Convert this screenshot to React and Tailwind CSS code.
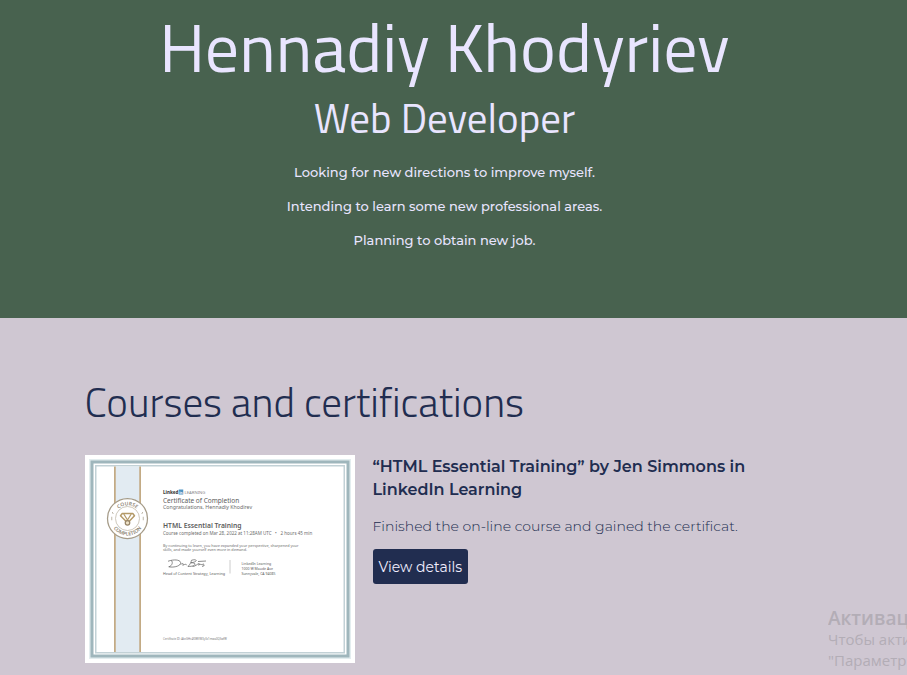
const heading = "font-['Titillium_Web','Roboto',sans-serif]";

const tagline = [
  "Looking for new directions to improve myself.",
  "Intending to learn some new professional areas.",
  "Planning to obtain new job.",
];

function Certificate() {
  return (
    <svg
      viewBox="0 0 1080 832"
      className="block w-full bg-white font-['Noto_Sans',sans-serif]"
      role="img"
      aria-label="Certificate of Completion"
    >
      <defs>
        <path id="seal-top" d="M 117 254 A 53 53 0 0 1 223 254" />
        <path id="seal-bottom" d="M 102 254 A 68 68 0 0 0 238 254" />
      </defs>
      <rect x="20" y="20" width="1040" height="792" fill="none" stroke="#e3edef" strokeWidth="8" />
      <rect x="28" y="28" width="1024" height="776" fill="none" stroke="#9fb6bc" strokeWidth="12" />
      <rect x="43" y="43" width="994" height="748" fill="none" stroke="#c2d1d6" strokeWidth="6" />
      <rect x="116" y="46" width="108" height="742" fill="#e2ebf2" />
      <rect x="116" y="46" width="7" height="742" fill="#c3ab85" />
      <rect x="217" y="46" width="7" height="742" fill="#c3ab85" />

      <circle cx="170" cy="254" r="80" fill="#ffffff" stroke="#a59b88" strokeWidth="5" />
      <circle cx="170" cy="254" r="48" fill="none" stroke="#bdb5a5" strokeWidth="3" />
      <g fill="#8e8676" fontSize="20" fontWeight="600" textAnchor="middle">
        <text><textPath href="#seal-top" startOffset="50%">COURSE</textPath></text>
        <text><textPath href="#seal-bottom" startOffset="50%">COMPLETION</textPath></text>
      </g>
      <g fill="none" stroke="#b49a68" strokeWidth="6" strokeLinejoin="round">
        <path d="M149 234 H191 L198 243 L178 264 H163 L142 243 Z" />
        <path d="M155 236 L170 260 L185 236" strokeWidth="5" />
        <circle cx="170" cy="271" r="9" fill="#efe3c9" stroke="#978568" strokeWidth="5" />
      </g>
      <path d="M109 228 L113 236 M107 247 V261 M231 228 L227 236 M233 247 V261" stroke="#aaa08e" strokeWidth="3" />

      <text x="312" y="156" fontSize="18" fontWeight="800" fill="#3c3c3c">Linked</text>
      <rect x="375" y="138" width="18" height="20" fill="#4f94c3" />
      <text x="377" y="154" fontSize="14" fontWeight="700" fill="#ffffff">in</text>
      <text x="398" y="156" fontSize="17" fill="#888888">LEARNING</text>
      <text x="312" y="192" fontSize="26" fill="#5c5c5c">Certificate of Completion</text>
      <text x="312" y="217" fontSize="21" fill="#6c6c6c">Congratulations, Hennadiy Khodirev</text>
      <text x="312" y="292" fontSize="27" fontWeight="600" fill="#5c5c5c">HTML Essential Training</text>
      <text x="312" y="321" fontSize="18" fill="#6c6c6c">Course completed on Mar 28, 2022 at 11:28AM UTC</text>
      <text x="760" y="321" fontSize="18" fill="#6c6c6c">•</text>
      <text x="782" y="321" fontSize="18" fill="#6c6c6c">2 hours 45 min</text>
      <text x="312" y="366" fontSize="15" fill="#6c6c6c">By continuing to learn, you have expanded your perspective, sharpened your</text>
      <text x="312" y="384" fontSize="15" fill="#6c6c6c">skills, and made yourself even more in demand.</text>
      <path
        d="M336 447 C350 443 353 425 344 422 M332 425 C360 415 386 420 382 434 C378 446 352 451 334 447 M382 438 C390 432 396 433 391 441 C402 436 405 436 407 441 M412 446 C421 438 425 426 426 421 C449 414 454 427 424 431 C449 430 445 446 412 446 M430 446 C442 446 447 437 456 434 C459 434 457 439 454 440 C463 436 465 437 468 440 C474 431 477 437 473 442 M452 426 L484 424 M468 446 L478 442"
        fill="none"
        stroke="#666666"
        strokeWidth="3"
      />
      <text x="312" y="478" fontSize="15" fill="#5c5c5c">Head of Content Strategy, Learning</text>
      <path d="M580 420 V474" stroke="#cccccc" strokeWidth="4" />
      <text x="626" y="439" fontSize="14" fill="#5c5c5c">LinkedIn Learning</text>
      <text x="626" y="458" fontSize="14" fill="#5c5c5c">1000 W Maude Ave</text>
      <text x="626" y="478" fontSize="14" fill="#5c5c5c">Sunnyvale, CA 94085</text>
      <text x="312" y="738" fontSize="11" fill="#777777">Certificate ID: AbcGHc4f0WVM3yXz1mwa0QSwfW</text>
    </svg>
  );
}

export default function App() {
  return (
    <div className="relative min-h-screen overflow-hidden bg-[#cfc7d2] font-['Montserrat','Inter',sans-serif] text-[#212d50]">
      <header className="bg-[#48624f] pr-[18px] pb-[67px] pt-2 text-center text-[#e9e5ff]">
        <h1 className={`${heading} text-[68px] leading-[78px]`}>Hennadiy Khodyriev</h1>
        <h2 className={`${heading} mt-[6px] text-[41px] leading-[52px]`}>Web Developer</h2>
        <div className="mt-[17px] flex flex-col gap-3 text-[13px] font-medium leading-[22px]">
          {tagline.map((line) => (
            <p key={line}>{line}</p>
          ))}
        </div>
      </header>

      <main className="pr-[18px] pt-[60px]">
        <div className="mx-auto max-w-[720px]">
          <h2 className={`${heading} text-[41px] font-light leading-[48px]`}>Courses and certifications</h2>
          <article className="mt-[29px] flex items-start gap-[18px]">
            <div className="w-[270px] shrink-0">
              <Certificate />
            </div>
            <div className="max-w-[390px]">
              <h3 className="text-[16px] font-semibold leading-[23px]">
                “HTML Essential Training” by Jen Simmons in LinkedIn Learning
              </h3>
              <p className="mt-[14px] text-[14px] font-light leading-[22px]">
                Finished the on-line course and gained the certificat.
              </p>
              <button
                type="button"
                className="mt-3 h-[35px] rounded-[3px] bg-[#212d50] px-[6px] pt-[2px] text-[14px] text-[#f1eeff]"
              >
                View details
              </button>
            </div>
          </article>
        </div>
      </main>

      <aside className="absolute bottom-1 right-0 w-[79px] overflow-hidden whitespace-nowrap font-['Open_Sans','Noto_Sans',sans-serif] text-[15px] leading-[21px] text-[#b3adb6]">
        <p className="text-[19px] font-semibold leading-[22px]">Активац</p>
        <p>Чтобы акти</p>
        <p>"Параметры</p>
      </aside>
    </div>
  );
}
